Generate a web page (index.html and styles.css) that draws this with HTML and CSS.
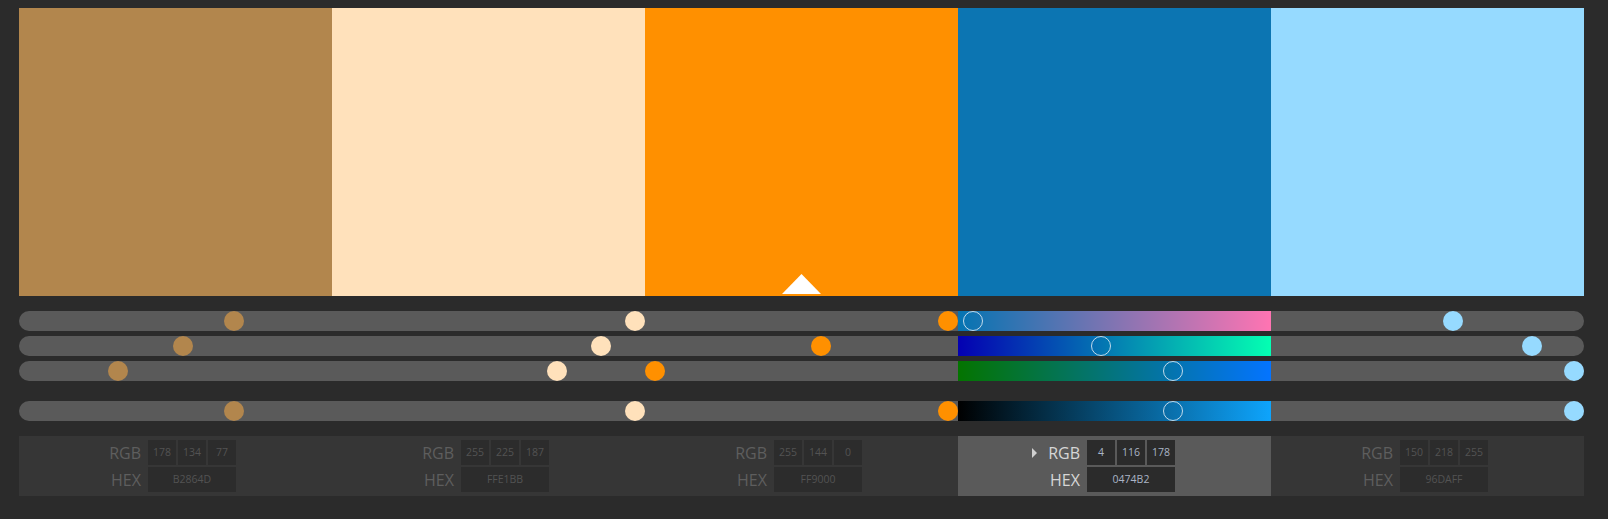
FILE: index.html
```html
<!DOCTYPE html>
<html>
<head>
<meta charset="utf-8">
<link rel="stylesheet" href="styles.css">
</head>
<body>
<div class="app">
  <div class="swatches">
    <div class="swatch" style="background:#b2864d"></div>
    <div class="swatch" style="background:#ffe1bb"></div>
    <div class="swatch" style="background:#ff9000"><div class="caret"></div></div>
    <div class="swatch" style="background:#0c75b2"></div>
    <div class="swatch" style="background:#96daff"></div>
  </div>

  <div class="sliders">
    <div class="track">
      <div class="cell"><div class="knob" style="left:204.5px;background:#b2864d"></div></div>
      <div class="cell"><div class="knob" style="left:293px;background:#ffe1bb"></div></div>
      <div class="cell"><div class="knob" style="left:293px;background:#ff9000"></div></div>
      <div class="cell grad-r"><div class="knob hollow" style="left:4.6px"></div></div>
      <div class="cell"><div class="knob" style="left:172.4px;background:#96daff"></div></div>
    </div>
    <div class="track">
      <div class="cell"><div class="knob" style="left:154px;background:#b2864d"></div></div>
      <div class="cell"><div class="knob" style="left:258.5px;background:#ffe1bb"></div></div>
      <div class="cell"><div class="knob" style="left:165.5px;background:#ff9000"></div></div>
      <div class="cell grad-g"><div class="knob hollow" style="left:133.3px"></div></div>
      <div class="cell"><div class="knob" style="left:250.5px;background:#96daff"></div></div>
    </div>
    <div class="track">
      <div class="cell"><div class="knob" style="left:88.5px;background:#b2864d"></div></div>
      <div class="cell"><div class="knob" style="left:214.9px;background:#ffe1bb"></div></div>
      <div class="cell"><div class="knob" style="left:0px;background:#ff9000"></div></div>
      <div class="cell grad-b"><div class="knob hollow" style="left:204.5px"></div></div>
      <div class="cell"><div class="knob" style="left:293px;background:#96daff"></div></div>
    </div>
    <div class="track track-v">
      <div class="cell"><div class="knob" style="left:204.5px;background:#b2864d"></div></div>
      <div class="cell"><div class="knob" style="left:293px;background:#ffe1bb"></div></div>
      <div class="cell"><div class="knob" style="left:293px;background:#ff9000"></div></div>
      <div class="cell grad-v"><div class="knob hollow" style="left:204.5px"></div></div>
      <div class="cell"><div class="knob" style="left:293px;background:#96daff"></div></div>
    </div>
  </div>

  <div class="panels">
    <div class="panel">
      <div class="label">RGB</div>
      <div class="boxes"><div class="box">178</div><div class="box">134</div><div class="box">77</div></div>
      <div class="label">HEX</div>
      <div class="box hex">B2864D</div>
    </div>
    <div class="panel">
      <div class="label">RGB</div>
      <div class="boxes"><div class="box">255</div><div class="box">225</div><div class="box">187</div></div>
      <div class="label">HEX</div>
      <div class="box hex">FFE1BB</div>
    </div>
    <div class="panel">
      <div class="label">RGB</div>
      <div class="boxes"><div class="box">255</div><div class="box">144</div><div class="box">0</div></div>
      <div class="label">HEX</div>
      <div class="box hex">FF9000</div>
    </div>
    <div class="panel active">
      <div class="label"><span class="arrow"></span>RGB</div>
      <div class="boxes"><div class="box">4</div><div class="box">116</div><div class="box">178</div></div>
      <div class="label">HEX</div>
      <div class="box hex">0474B2</div>
    </div>
    <div class="panel">
      <div class="label">RGB</div>
      <div class="boxes"><div class="box">150</div><div class="box">218</div><div class="box">255</div></div>
      <div class="label">HEX</div>
      <div class="box hex">96DAFF</div>
    </div>
  </div>
</div>
</body>
</html>
```

FILE: styles.css
```css
html, body {
  margin: 0;
  padding: 0;
  background: #2b2b2b;
  font-family: "Open Sans", "Noto Sans", sans-serif;
}
.app {
  width: 1565px;
  padding: 8px 0 0 19px;
}
.swatches {
  display: grid;
  grid-template-columns: repeat(5, 313px);
  height: 288px;
}
.swatch {
  position: relative;
}
.caret {
  position: absolute;
  left: 137px;
  bottom: 2px;
  width: 39px;
  height: 20px;
  background: #ffffff;
  clip-path: polygon(50% 0, 100% 100%, 0 100%);
}
.sliders {
  margin-top: 15px;
  display: flex;
  flex-direction: column;
  gap: 5px;
}
.track {
  display: grid;
  grid-template-columns: repeat(5, 313px);
  height: 20px;
  background: #5a5a5a;
  border-radius: 10px;
}
.track-v {
  margin-top: 15px;
}
.cell {
  position: relative;
  height: 20px;
}
.knob {
  position: absolute;
  top: 0;
  width: 20px;
  height: 20px;
  border-radius: 50%;
  z-index: 2;
}
.knob.hollow {
  box-sizing: border-box;
  border: 1px solid rgba(225, 235, 245, 0.85);
  background: transparent;
}
.grad-r { background: linear-gradient(to right, rgb(4,116,178), rgb(255,116,178)); }
.grad-g { background: linear-gradient(to right, rgb(4,0,178), rgb(4,255,178)); }
.grad-b { background: linear-gradient(to right, rgb(4,116,0), rgb(4,116,255)); }
.grad-v { background: linear-gradient(to right, rgb(0,0,0), rgb(14,164,252)); }

.panels {
  margin-top: 15px;
  display: grid;
  grid-template-columns: repeat(5, 313px);
}
.panel {
  background: #363636;
  height: 60px;
  box-sizing: border-box;
  padding: 4px 0 4px 0;
  display: grid;
  grid-template-columns: 122px 88px;
  grid-template-rows: 25px 25px;
  column-gap: 7px;
  row-gap: 2px;
}
.label {
  display: flex;
  justify-content: flex-end;
  align-items: center;
  font-size: 16px;
  color: #5e5e5e;
  line-height: 1;
}
.boxes {
  display: grid;
  grid-template-columns: repeat(3, 28px);
  column-gap: 2px;
}
.box {
  background: #2c2c2c;
  color: #535353;
  font-size: 10.5px;
  display: flex;
  align-items: center;
  justify-content: center;
  line-height: 1;
}
.panel.active {
  background: #5a5a5a;
}
.panel.active .label {
  color: #d6d6d6;
}
.panel.active .box {
  background: #2b2b2b;
  color: #aab4c6;
}
.arrow {
  width: 0;
  height: 0;
  border-left: 5px solid #d0d0d0;
  border-top: 5px solid transparent;
  border-bottom: 5px solid transparent;
  margin-right: 11px;
}
```
